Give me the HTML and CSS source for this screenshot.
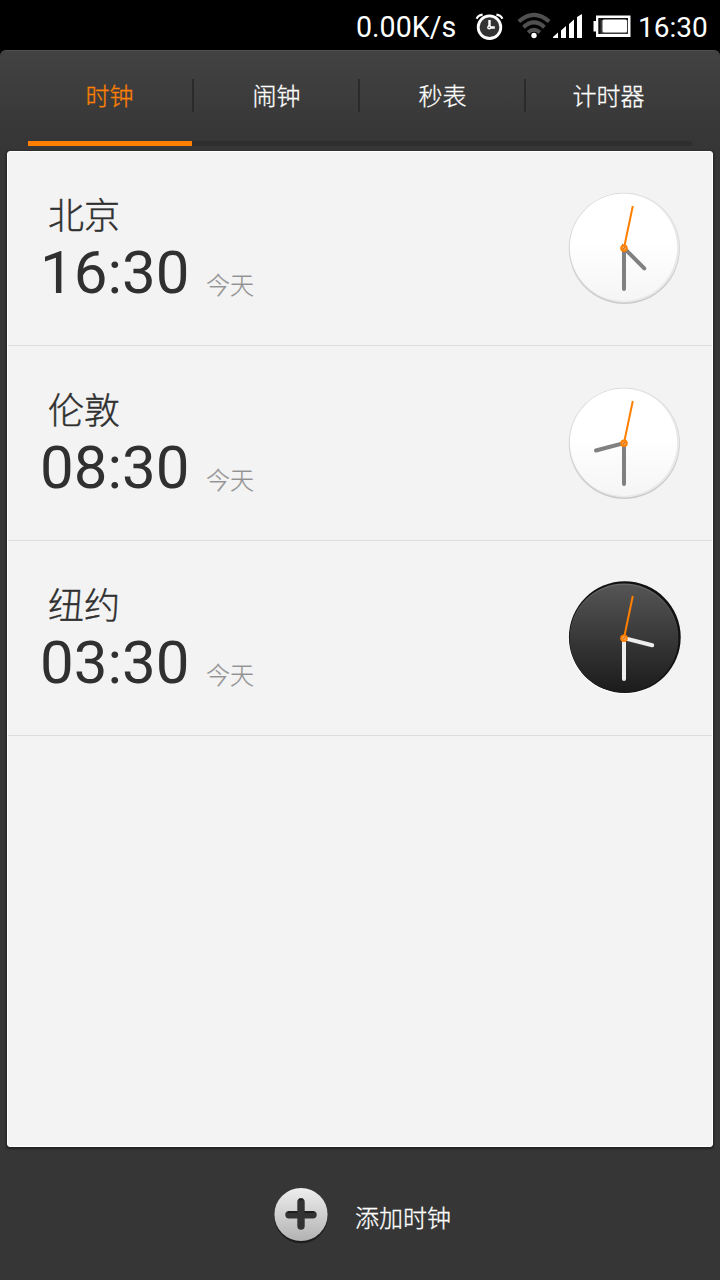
FILE: index.html
```html
<!DOCTYPE html>
<html lang="zh-CN">
<head>
<meta charset="utf-8">
<title>时钟</title>
<link rel="stylesheet" href="styles.css">
</head>
<body>
<svg class="defs" width="0" height="0" aria-hidden="true">
  <defs>
    <linearGradient id="day" x1="0" y1="0" x2="0" y2="1"><stop offset=".45" stop-color="#fff"/><stop offset="1" stop-color="#f5f5f5"/></linearGradient>
    <linearGradient id="dayRim" x1="0" y1="0" x2=".25" y2="1"><stop offset="0" stop-color="#d0d0d0"/><stop offset=".4" stop-color="#dadada"/><stop offset="1" stop-color="#cbcbcb"/></linearGradient>
    <linearGradient id="night" x1="0" y1="0" x2="0" y2="1"><stop offset="0" stop-color="#555"/><stop offset="1" stop-color="#1b1b1b"/></linearGradient>
    <linearGradient id="nightRim" x1="0" y1="0" x2="0" y2="1"><stop offset="0" stop-color="#6a6a6a"/><stop offset=".5" stop-color="#383838"/><stop offset="1" stop-color="#1b1b1b"/></linearGradient>
    <linearGradient id="plus" x1="0" y1="0" x2="0" y2="1"><stop offset="0" stop-color="#eee"/><stop offset="1" stop-color="#b2b2b2"/></linearGradient>
    <g id="dayFace">
      <circle cx="60.3" cy="60.4" r="55.6" fill="url(#dayRim)"/>
      <circle cx="60.5" cy="59.9" r="54.6" fill="#e9e9e9"/>
      <circle cx="59.5" cy="59.3" r="53.6" fill="url(#day)"/>
    </g>
    <g id="nightFace">
      <circle cx="60.2" cy="60" r="56" fill="#fff"/>
      <circle cx="60.8" cy="59.2" r="55.9" fill="#111"/>
      <circle cx="60" cy="59.9" r="54.4" fill="url(#nightRim)"/>
      <circle cx="60" cy="60.6" r="53.8" fill="url(#night)"/>
    </g>
    <g id="second">
      <path d="M60 60 68.8 18" fill="none" stroke="#ff8000" stroke-width="2"/>
      <circle cx="60" cy="60.3" r="2.8" fill="#ffae5c" stroke="#ff8000" stroke-width="2"/>
      <path d="M59 61.2 61 59.4" stroke="#a55a14" stroke-width="1"/>
    </g>
  </defs>
</svg>
<header class="status">
  <span class="speed">0.00K/s</span>
  <svg class="alarm" width="30" height="30" viewBox="0 0 30 30" fill="none" stroke="#fff">
    <circle cx="15.5" cy="15.2" r="11.3" fill="#333" stroke-width="2.8"/>
    <path d="M2.6 6.8Q4.2 3.2 8.6 2.7M22.4 2.7Q26.8 3.2 28.4 6.8" stroke-width="2.2"/>
    <path d="M15.5 8V15.5H20.8" stroke-width="2.4"/>
    <circle cx="15.2" cy="15.4" r="1.4" fill="#333" stroke-width="1.4"/>
  </svg>
  <svg class="wifi" width="34" height="28" viewBox="0 0 34 28" fill="none" stroke="#505050" stroke-width="4">
    <path d="M1.8 9.5Q17-3.8 32.2 9.5M6.5 15.2Q17 5.6 27.5 15.2M11.2 20.5Q17 15 22.8 20.5"/>
    <circle cx="17" cy="23.5" r="2.7" fill="#fff" stroke="none"/>
  </svg>
  <svg class="signal" width="30" height="26" viewBox="0 0 30 26" fill="#fff">
    <path d="M0 25V24L5 19.5V25ZM8 25V17.5L13 13V25ZM16 25V11L21 6.5V25ZM24 25V4L29 1V25Z"/>
  </svg>
  <svg class="battery" width="38" height="24" viewBox="0 0 38 24">
    <path d="M3 1.5H37.5V23H3V17.5H.5V7H3Z" fill="#fff"/>
    <rect x="5.5" y="4" width="29.5" height="16" fill="#3a3a3a"/>
    <path d="M7.5 20V6H35V4H5.5V20Z" fill="#111"/>
    <rect x="9.5" y="5.5" width="24.5" height="13" rx="1.5" fill="#fff"/>
  </svg>
  <span class="now">16:30</span>
</header>
<div class="app">
  <nav class="tabs">
    <a class="tab active">时钟</a>
    <a class="tab">闹钟</a>
    <a class="tab">秒表</a>
    <a class="tab">计时器</a>
  </nav>
  <main class="card">
    <section class="row">
      <div class="info">
        <div class="city">北京</div>
        <div class="when"><span class="time">16:30</span><span class="date">今天</span></div>
      </div>
      <svg class="clock" width="120" height="120" viewBox="0 0 120 120">
        <use href="#dayFace"/>
        <path class="hands" d="M80.3 80.3 60 60V101"/>
        <use href="#second"/>
      </svg>
    </section>
    <section class="row">
      <div class="info">
        <div class="city">伦敦</div>
        <div class="when"><span class="time">08:30</span><span class="date">今天</span></div>
      </div>
      <svg class="clock" width="120" height="120" viewBox="0 0 120 120">
        <use href="#dayFace"/>
        <path class="hands" d="M32 67.5 60 60V101"/>
        <use href="#second"/>
      </svg>
    </section>
    <section class="row">
      <div class="info">
        <div class="city">纽约</div>
        <div class="when"><span class="time">03:30</span><span class="date">今天</span></div>
      </div>
      <svg class="clock" width="120" height="120" viewBox="0 0 120 120">
        <use href="#nightFace"/>
        <path class="hands light" d="M88.2 67.3 60 60V101"/>
        <use href="#second"/>
      </svg>
    </section>
  </main>
  <footer class="add">
    <svg width="58" height="60" viewBox="0 0 58 60">
      <circle cx="29" cy="30.4" r="26.8" fill="#1c1c1c"/>
      <circle cx="29" cy="28.5" r="26.6" fill="url(#plus)"/>
      <path d="M29 16V40M17 28.7H41" stroke="#333" stroke-width="7.4" stroke-linecap="round"/>
      <path d="M16 26.1H25.5M32.5 26.1H42M27 13.4H31" stroke="#1c1c1c" stroke-width="1.6"/>
    </svg>
    <span class="add-label">添加时钟</span>
  </footer>
</div>
</body>
</html>
```
FILE: styles.css
```css
* { box-sizing: border-box; }
body {
  margin: 0;
  width: 720px;
  height: 1280px;
  overflow: hidden;
  background: #000;
  color: #fff;
  font-family: Roboto, "Noto Sans CJK SC", sans-serif;
}
.defs { display: block; }
.status {
  display: flex;
  align-items: flex-start;
  height: 50px;
  padding: 12px 0 0 356px;
  line-height: 30px;
}
.speed { width: 118px; font-size: 28.6px; }
.wifi { margin: 0 2px 0 13px; }
.signal { margin: 1px 10px 0 0; }
.battery { margin: 2px 7px 0 0; }
.now { padding-top: 1px; font-size: 28px; }
.app {
  display: flex;
  flex-direction: column;
  height: 1230px;
  padding: 0 7px;
  border-radius: 6px 6px 0 0;
  border-top: 1px solid #505050;
  background: linear-gradient(#424242, #363636 90px, #363636);
}
.tabs {
  display: flex;
  height: 95px;
  margin: 0 21px 5px;
  border-bottom: 5px solid #2e2e2e;
}
.tab {
  position: relative;
  flex: 1;
  height: 95px;
  padding: 28px 1px 0 0;
  font-size: 24px;
  font-weight: 300;
  line-height: 36px;
  text-align: center;
  -webkit-text-stroke: 0.3px currentColor;
}
.tab + .tab::before {
  content: "";
  position: absolute;
  left: -2px;
  top: 28px;
  width: 2px;
  height: 33px;
  background: #2a2a2a;
}
.active { color: #ff8000; border-bottom: 5px solid #ff8000; margin-right: 2px; flex: 0 0 164px; }
.card {
  height: 996px;
  border: 1px solid #fff;
  border-radius: 3px;
  background: #f3f3f3;
  box-shadow: 0 1px 2px 1px #222;
}
.row {
  display: flex;
  justify-content: space-between;
  height: 195px;
  padding: 37px 28px 0 31px;
  border-bottom: 1px solid #dedede;
  color: #303030;
}
.row:first-child { height: 194px; padding-top: 36px; }
.info { padding-top: 9px; }
.city {
  margin-left: 9px;
  font-size: 36px;
  font-weight: 300;
  line-height: 40px;
  -webkit-text-stroke: 0.4px currentColor;
}
.when { display: flex; align-items: flex-start; margin-top: 6px; }
.time { width: 150px; margin: 0 16px 0 1px; font-size: 60px; line-height: 60px; }
.date {
  margin-top: 27px;
  color: #929292;
  font-size: 24px;
  font-weight: 300;
  line-height: 32px;
  -webkit-text-stroke: 0.2px currentColor;
}
.hands { fill: none; stroke: #808080; stroke-width: 4; stroke-linecap: round; }
.light { stroke: #eee; }
.add {
  display: flex;
  align-items: flex-start;
  padding: 39px 0 0 265px;
}
.add-label {
  margin: 15px 0 0 25px;
  font-size: 24px;
  font-weight: 300;
  line-height: 36px;
  -webkit-text-stroke: 0.3px currentColor;
}
```
